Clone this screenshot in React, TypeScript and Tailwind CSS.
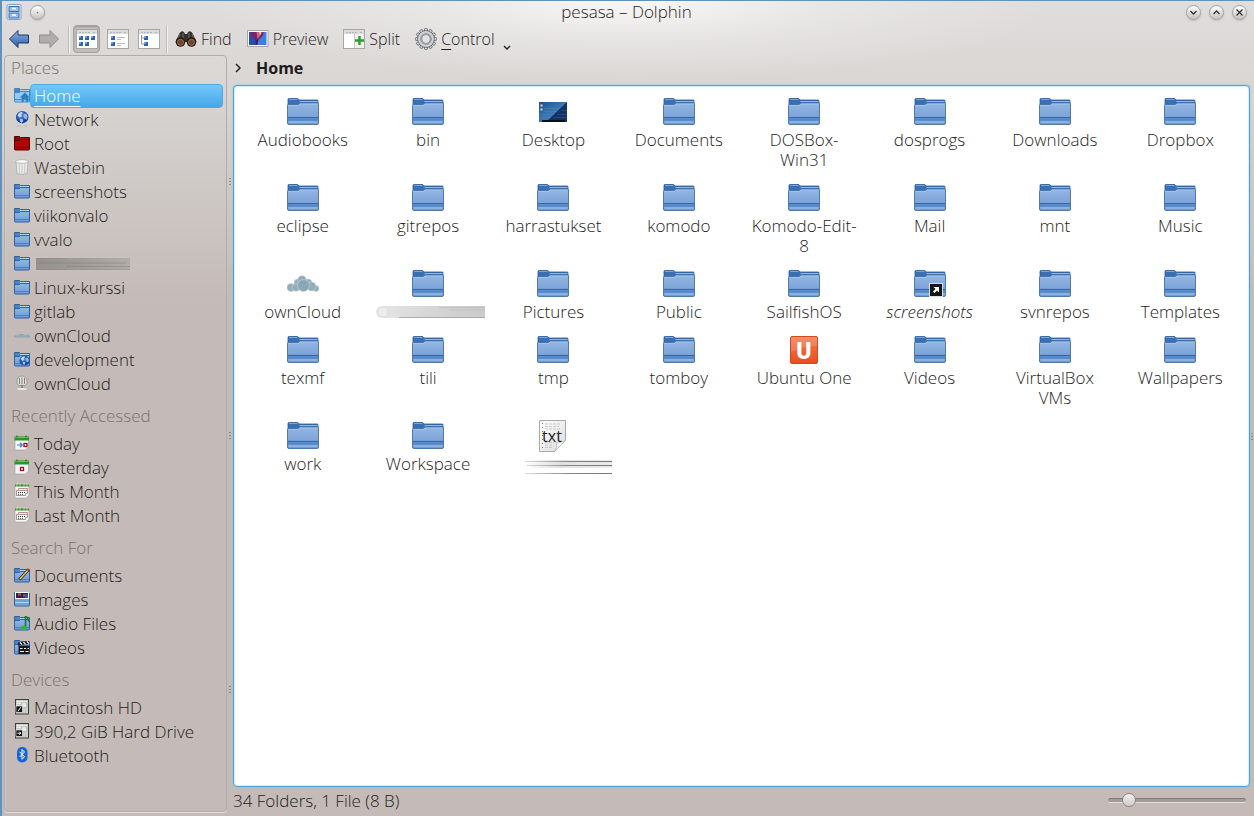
import { useState, type ReactElement, type ReactNode } from 'react'

interface Place {
  id: string
  label: string
  icon: ReactElement
}

interface PlaceSection {
  title: string
  places: Place[]
}

interface FileEntry {
  id: string
  name: string
  kind?: 'desktop' | 'cloud' | 'ubuntu' | 'text' | 'link'
}

function SmallFolder({ tone = 'blue', children }: { tone?: 'blue' | 'red' | 'light'; children?: ReactNode }): ReactElement {
  const red = tone === 'red'
  const edge = red ? '#5c0000' : tone === 'light' ? '#3f8cc4' : '#2f5f9e'
  const front = red ? '#b00505' : tone === 'light' ? '#8fcbf3' : 'url(#folderFront)'
  return (
    <svg viewBox="0 0 16 16" className="h-4 w-4">
      <path d="M.5 14V1.5h5l1 1h9V14z" fill={red ? '#8d0505' : '#4a83c6'} stroke={edge} />
      <path d="M6 3.5h9" stroke={red ? '#a11' : '#b8d6f5'} />
      <path d="M.5 5.5h5l1-1h9v9.5a1 1 0 0 1-1 1h-13a1 1 0 0 1-1-1z" fill={front} stroke={edge} />
      <path d="M1 12.5h14" stroke={red ? '#8a0000' : '#4a7fc0'} />
      {children}
    </svg>
  )
}

function Globe({ x = 0, y = 0, r = 6 }: { x?: number; y?: number; r?: number }): ReactElement {
  return (
    <g transform={`translate(${x} ${y}) scale(${r / 6})`}>
      <circle cx="6" cy="6" r="6" fill="url(#globeBlue)" />
      <path d="M1.500 4Q3 1 6 .8L6.500 2.500 5 3.500 5.500 5 3.500 6.500z" fill="#c4dbf8" />
      <path d="M7.500 3l2.500-.5 1.300 3-1 3-1.800-1-1.500-2.500z" fill="#8fb6ec" />
      <path d="M4 7.500l2.500.5.5 1.500-1.500 2-1.500-1.500z" fill="#a9c8f2" />
    </g>
  )
}

function NetworkIcon(): ReactElement {
  return (
    <svg viewBox="0 0 16 16" className="h-4 w-4">
      <path d="M3 15.2q5-2.4 10 0z" fill="#f2f2f2" stroke="#aaa" strokeWidth=".5" />
      <path d="M8 12v2.5" stroke="#ddd" strokeWidth="2" />
      <Globe x={2} y={0} r={6.2} />
    </svg>
  )
}

function WastebinIcon(): ReactElement {
  return (
    <svg viewBox="0 0 16 16" className="h-4 w-4">
      <path d="M2 2.5h12l-1 12q-5 2-10 0z" fill="#ececea" stroke="#a3a09e" strokeWidth=".7" />
      <path d="M5 4l.5 10M8 4v10.500M11 4l-.5 10" stroke="#c9c6c4" />
      <ellipse cx="8" cy="2.500" rx="6.300" ry="1.700" fill="#fff" stroke="#999" strokeWidth=".6" />
    </svg>
  )
}

function CloudShape(): ReactElement {
  return (
    <g fill="#93adb9" stroke="#c8d6dc" strokeWidth=".6">
      <circle cx="11" cy="10" r="4" />
      <circle cx="21" cy="10" r="4" />
      <circle cx="15" cy="7" r="4.300" />
      <circle cx="4" cy="14.500" r="4" />
      <circle cx="29" cy="15.500" r="3" />
      <circle cx="9" cy="14.500" r="3.800" />
      <circle cx="24.500" cy="13.500" r="4.500" />
      <circle cx="16.500" cy="12.500" r="6" fill="#8aa7b5" />
    </g>
  )
}

function SmallCloud(): ReactElement {
  return (
    <svg viewBox="0 0 16 16" className="h-4 w-4">
      <path d="M.5 10.500a2 1.500 0 0 1 3-2q4-3.500 8 0a2 1.500 0 0 1 4 2z" fill="#86a7b4" />
      <path d="M2 9h12" stroke="#a4bcc5" strokeWidth=".7" />
    </svg>
  )
}

function ServerIcon(): ReactElement {
  return (
    <svg viewBox="0 0 16 16" className="h-4 w-4">
      <path d="M3 6a5 5 0 0 1 10 0v3l-2 1.500H5L3 9z" fill="#e2e2e0" stroke="#8d8b89" strokeWidth=".8" />
      <path d="M5.500 3v6M8 2.500v7M10.500 3v6" stroke="#807e7c" />
      <ellipse cx="8" cy="14" rx="5.500" ry="1.500" fill="#eee" stroke="#999" strokeWidth=".5" />
      <path d="M8 10v3" stroke="#888" strokeWidth="2" />
    </svg>
  )
}

function CalendarIcon({ variant }: { variant: 'today' | 'day' | 'month' }): ReactElement {
  if (variant === 'month') {
    return (
      <svg viewBox="0 0 16 16" className="h-4 w-4">
        <path d="M1 2h14v10l-3 3H1z" fill="#fafafa" stroke="#999" strokeWidth=".6" />
        <path d="M1 1.500h14v2H1z" fill="#2b9423" />
        <path d="M3 0v3M6 0v3M10 0v3M13 0v3" stroke="#e8f5e5" strokeWidth=".7" />
        <path d="M4.500 5.500h9v5h-2v2h-9v-5h2z" fill="#fff" stroke="#b56a6a" strokeWidth=".8" />
        <path d="M5.500 7.500h7M4 9.500h8M4 11.300h6" stroke="#333" strokeDasharray="1 1" />
      </svg>
    )
  }
  return (
    <svg viewBox="0 0 16 16" className="h-4 w-4">
      <path d="M1 2h13.500v10l-3 3H1z" fill="#f7f7f7" stroke="#999" strokeWidth=".6" />
      <path d="M.5 1.500h14.500v4H.5z" fill="#2b9423" />
      <path d="M1 2.500h13.500" stroke="#6cc763" />
      <path d="M3 .5v2M12 .5v2" stroke="#1c5f17" />
      {variant === 'today' && <path d="M3 10h5M6 7.800L8.300 10 6 12.200" fill="none" stroke="#3a7fd0" strokeWidth="1.200" />}
      <rect x={variant === 'today' ? 10 : 6.5} y="8.500" width="3" height="3" fill="#fff" stroke="#8e1328" strokeWidth="1.300" />
    </svg>
  )
}

function DriveIcon({ mount }: { mount?: boolean }): ReactElement {
  return (
    <svg viewBox="0 0 16 16" className="h-4 w-4">
      <rect x="1.500" y=".5" width="13" height="14.500" fill="#c9cfc6" stroke="#3c423b" />
      <path d="M3 2.500h10M3 4.500h10" stroke="#f1f4ef" />
      <circle cx="10" cy="6" r="3" fill="#e6eae4" stroke="#95a093" strokeWidth=".6" />
      <rect x="2" y="7" width="6.500" height="6.500" fill="#111" stroke="#fff" strokeWidth=".6" />
      <path d={mount ? 'M3.500 10.200h3.200M5.300 8.700l1.500 1.500-1.500 1.500' : 'M4 12.300l2.700-4'} fill="none" stroke="#fff" />
    </svg>
  )
}

function BluetoothIcon(): ReactElement {
  return (
    <svg viewBox="0 0 16 16" className="h-4 w-4">
      <rect x="3" y="0" width="10.500" height="15.500" rx="5" fill="#1565d8" />
      <path d="M5.500 4.800l5 5L8 12.300V2.500l2.500 2.500-5 5" fill="none" stroke="#fff" />
    </svg>
  )
}

const sections: PlaceSection[] = [
  {
    title: 'Places',
    places: [
      {
        id: 'home',
        label: 'Home',
        icon: (
          <SmallFolder tone="light">
            <path d="M6 10.500L10.800 5.500l5 5h-1.500V15h-2.300v-3H9.800v3H7.500v-4.500z" fill="#2c7dbd" stroke="#5fa9dc" strokeWidth=".4" />
          </SmallFolder>
        ),
      },
      { id: 'network', label: 'Network', icon: <NetworkIcon /> },
      { id: 'root', label: 'Root', icon: <SmallFolder tone="red" /> },
      { id: 'wastebin', label: 'Wastebin', icon: <WastebinIcon /> },
      { id: 'screenshots', label: 'screenshots', icon: <SmallFolder /> },
      { id: 'viikonvalo', label: 'viikonvalo', icon: <SmallFolder /> },
      { id: 'vvalo', label: 'vvalo', icon: <SmallFolder /> },
      { id: 'hidden', label: '', icon: <SmallFolder /> },
      { id: 'linux-kurssi', label: 'Linux-kurssi', icon: <SmallFolder /> },
      { id: 'gitlab', label: 'gitlab', icon: <SmallFolder /> },
      { id: 'owncloud', label: 'ownCloud', icon: <SmallCloud /> },
      {
        id: 'development',
        label: 'development',
        icon: (
          <SmallFolder>
            <Globe x={5.5} y={4.5} r={5} />
          </SmallFolder>
        ),
      },
      { id: 'owncloud-remote', label: 'ownCloud', icon: <ServerIcon /> },
    ],
  },
  {
    title: 'Recently Accessed',
    places: [
      { id: 'today', label: 'Today', icon: <CalendarIcon variant="today" /> },
      { id: 'yesterday', label: 'Yesterday', icon: <CalendarIcon variant="day" /> },
      { id: 'this-month', label: 'This Month', icon: <CalendarIcon variant="month" /> },
      { id: 'last-month', label: 'Last Month', icon: <CalendarIcon variant="month" /> },
    ],
  },
  {
    title: 'Search For',
    places: [
      {
        id: 'documents',
        label: 'Documents',
        icon: (
          <SmallFolder>
            <path d="M5.500 12.500L14.500 2.500" stroke="#332a20" strokeWidth="3" />
            <path d="M6 12L14 3" stroke="#eec04a" strokeWidth="1.500" />
            <path d="M13.500 3.500l1.300-1.500" stroke="#c8362e" strokeWidth="2" />
          </SmallFolder>
        ),
      },
      {
        id: 'images',
        label: 'Images',
        icon: (
          <SmallFolder>
            <rect x="1.500" y="1.500" width="13" height="6" fill="#3b1d3e" stroke="#fff" />
            <path d="M4 3.500h3M9 4.500h2" stroke="#c05a3c" strokeWidth="2" />
            <path d="M11 3h3v4h-3z" fill="#2c59b4" />
            <path d="M1 8.500h14V14.500H1z" fill="#6ea0dc" />
            <path d="M1 11.500h14" stroke="#b5d2f2" />
          </SmallFolder>
        ),
      },
      {
        id: 'audio',
        label: 'Audio Files',
        icon: (
          <SmallFolder>
            <path d="M11.500 1v11M11.500 1.500q3 1 3 5" fill="none" stroke="#157a25" strokeWidth="1.600" />
            <ellipse cx="9.700" cy="13" rx="3" ry="2.200" fill="#2fb53d" />
          </SmallFolder>
        ),
      },
      {
        id: 'videos',
        label: 'Videos',
        icon: (
          <SmallFolder>
            <path d="M4.500 6.500h11V15h-11z" fill="#181818" />
            <path d="M4 3.500l11-1.500v3L4 6.500z" fill="#222" />
            <path d="M6 3.300l2 2.400M9.500 2.900l2 2.400M13 2.400l1.800 2.200M6 9.500h2.500M10 9.500h2M13.500 9.500h1.500M6 12.500h4M11.500 12.500h3" stroke="#f4f4f4" strokeWidth="1.200" />
          </SmallFolder>
        ),
      },
    ],
  },
  {
    title: 'Devices',
    places: [
      { id: 'macintosh', label: 'Macintosh HD', icon: <DriveIcon /> },
      { id: 'hard-drive', label: '390,2 GiB Hard Drive', icon: <DriveIcon mount /> },
      { id: 'bluetooth', label: 'Bluetooth', icon: <BluetoothIcon /> },
    ],
  },
]

const files: FileEntry[] = [
  { id: 'f1', name: 'Audiobooks' },
  { id: 'f2', name: 'bin' },
  { id: 'f3', name: 'Desktop', kind: 'desktop' },
  { id: 'f4', name: 'Documents' },
  { id: 'f5', name: 'DOSBox-Win31' },
  { id: 'f6', name: 'dosprogs' },
  { id: 'f7', name: 'Downloads' },
  { id: 'f8', name: 'Dropbox' },
  { id: 'f9', name: 'eclipse' },
  { id: 'f10', name: 'gitrepos' },
  { id: 'f11', name: 'harrastukset' },
  { id: 'f12', name: 'komodo' },
  { id: 'f13', name: 'Komodo-Edit-8' },
  { id: 'f14', name: 'Mail' },
  { id: 'f15', name: 'mnt' },
  { id: 'f16', name: 'Music' },
  { id: 'f17', name: 'ownCloud', kind: 'cloud' },
  { id: 'f18', name: '' },
  { id: 'f19', name: 'Pictures' },
  { id: 'f20', name: 'Public' },
  { id: 'f21', name: 'SailfishOS' },
  { id: 'f22', name: 'screenshots', kind: 'link' },
  { id: 'f23', name: 'svnrepos' },
  { id: 'f24', name: 'Templates' },
  { id: 'f25', name: 'texmf' },
  { id: 'f26', name: 'tili' },
  { id: 'f27', name: 'tmp' },
  { id: 'f28', name: 'tomboy' },
  { id: 'f29', name: 'Ubuntu One', kind: 'ubuntu' },
  { id: 'f30', name: 'Videos' },
  { id: 'f31', name: 'VirtualBox VMs' },
  { id: 'f32', name: 'Wallpapers' },
  { id: 'f33', name: 'work' },
  { id: 'f34', name: 'Workspace' },
  { id: 'f35', name: '', kind: 'text' },
]

function FileIcon({ kind }: { kind?: FileEntry['kind'] }): ReactElement {
  if (kind === 'desktop') {
    return (
      <svg viewBox="0 0 32 32" className="h-8 w-8">
        <rect x="2" y="6" width="28" height="20" fill="url(#desktopBlue)" />
        <path d="M30 6v20H9z" fill="#123263" />
        <path d="M7 12.500h16M7 15.500h13M5 18.500h12M5 21.500h9" stroke="#4a86bd" strokeWidth=".5" />
        <path d="M24 14.500h6M20 18.500h10M16 21.500h14" stroke="#2f5c98" strokeWidth=".6" />
        <path d="M3.500 9.500h2M3.500 13.500h2" stroke="#c9e3c6" strokeWidth="2" />
        <path d="M5 25h23" stroke="#0a0f18" strokeWidth="2" />
      </svg>
    )
  }
  if (kind === 'cloud') {
    return (
      <svg viewBox="0 0 32 32" className="h-8 w-8">
        <g transform="translate(0 5)">
          <CloudShape />
        </g>
      </svg>
    )
  }
  if (kind === 'ubuntu') {
    return (
      <svg viewBox="0 0 32 32" className="h-8 w-8">
        <rect x="2.500" y="2.500" width="27" height="27" rx="1.500" fill="url(#ubuntuOrange)" stroke="#cf4a22" />
        <path d="M3 3h26v9Q16 12 3 18z" fill="#fff" opacity=".15" />
        <text x="16" y="24.500" textAnchor="middle" fontSize="23" fontWeight="900" fontFamily="Roboto, sans-serif" fill="#fff">
          U
        </text>
      </svg>
    )
  }
  if (kind === 'text') {
    return (
      <svg viewBox="0 0 32 32" className="h-8 w-8">
        <path d="M2.500.5h26v20l-11 11h-15z" fill="url(#paper)" stroke="#a9a9a9" />
        <path d="M8 4h16M8 6.500h14M8 9h16M8 22.500h9M8 25h7M8 27.500h8" stroke="#bdbdbd" strokeWidth=".8" strokeDasharray="3 1" />
        <path d="M5.500 3v27" stroke="#777" strokeDasharray="1 3" />
        <path d="M28.500 20.500q-6 3-9 1.500 1 5-2 9.500z" fill="#f3f3f3" stroke="#aaa" strokeWidth=".6" />
        <text x="15" y="22" textAnchor="middle" fontSize="16" fontWeight="400" fontFamily="Open Sans, sans-serif" fill="#222">
          txt
        </text>
      </svg>
    )
  }
  return (
    <svg viewBox="0 0 32 32" className="h-8 w-8">
      <g transform="translate(0 1)">
        <path d="M1 9V2.300q0-.8.8-.8h9l1.500 1.500h18q.7 0 .7.700V9z" fill="#3a70b3" stroke="#2a5b9b" strokeWidth=".8" />
        <path d="M2 2.500h8.500" stroke="#74a5dd" />
        <path d="M12.500 4.500h18" stroke="#8db9e8" />
        <path d="M.5 8.500q0-1 1-1h9.500l2-1.500h17.500q1 0 1 1v19q0 1.500-1.500 1.500H2q-1.500 0-1.500-1.500z" fill="url(#folderFront)" stroke="#44719f" strokeWidth=".9" />
        <path d="M1.500 8.500h9.800l2-1.500h17.500" fill="none" stroke="#a6c8ef" strokeWidth=".8" />
        <path d="M1 20.500h30" stroke="#3567a8" strokeWidth="1.200" />
        <path d="M1 22.500h30" stroke="#5388c9" strokeWidth="2.500" />
        <path d="M1.500 25h29" stroke="#92b8e4" strokeWidth="1.500" />
      </g>
      {kind === 'link' && (
        <>
          <rect x="15.500" y="15.500" width="13" height="13" fill="#161616" stroke="#ddd" />
          <path d="M19.500 19h5.500v5.500l-2-2-2.500 2.500-1.500-1.500 2.500-2.500z" fill="#fff" />
        </>
      )}
    </svg>
  )
}

// Smudges that stand where a name has been wiped out
function SidebarSmudge(): ReactElement {
  return (
    <svg viewBox="0 0 94 12" className="ml-[2px] h-3 w-[94px]">
      <rect width="94" height="12" fill="url(#smudgeDark)" />
      <path d="M0 5h90M30 8.500h64" stroke="#77726f" strokeWidth=".7" opacity=".6" />
      <path d="M0 .5h30M0 11.500h94" stroke="#8a8582" strokeWidth=".6" opacity=".6" />
    </svg>
  )
}

function FolderSmudge(): ReactElement {
  return (
    <svg viewBox="0 0 118 20" className="h-5 w-[118px]">
      <path d="M13 4h103v12H13a6 6 0 0 1 0-12z" fill="url(#smudgeLight)" />
      <circle cx="14" cy="10" r="5" fill="#ededed" stroke="#d8d8d8" strokeWidth=".7" />
      <path d="M70 5.500h46M80 8h36" stroke="#b5b5b5" strokeWidth=".6" />
      <path d="M30 15.500h86" stroke="#999" strokeWidth=".7" />
    </svg>
  )
}

function TextSmudge(): ReactElement {
  return (
    <svg viewBox="0 0 118 20" className="h-5 w-[118px]">
      <rect x="31" y="6" width="87" height="8" fill="url(#smudgeFade)" />
      <rect x="31" y="7" width="87" height="1" fill="url(#smudgeLine)" />
      <rect x="33" y="11" width="85" height="1" fill="url(#smudgeLine)" />
      <rect x="31" y="19" width="87" height="1" fill="url(#smudgeLine)" />
    </svg>
  )
}

function SharedGradients(): ReactElement {
  return (
    <svg className="absolute h-0 w-0" aria-hidden="true">
      <defs>
        <linearGradient id="folderFront" x1="0" y1="0" x2="0" y2="1">
          <stop offset="0" stopColor="#93b7e4" />
          <stop offset="1" stopColor="#7099d2" />
        </linearGradient>
        <linearGradient id="desktopBlue" x1="0" y1="0" x2="1" y2="1">
          <stop offset="0" stopColor="#1f4f86" />
          <stop offset=".5" stopColor="#3c78b4" />
        </linearGradient>
        <radialGradient id="globeBlue" cx=".4" cy=".35">
          <stop offset="0" stopColor="#5d94e0" />
          <stop offset="1" stopColor="#173f95" />
        </radialGradient>
        <linearGradient id="ubuntuOrange" x1="0" y1="0" x2="0" y2="1">
          <stop offset="0" stopColor="#f3794e" />
          <stop offset="1" stopColor="#ea4f1c" />
        </linearGradient>
        <linearGradient id="paper" x1="0" y1="0" x2="1" y2="1">
          <stop offset="0" stopColor="#fff" />
          <stop offset="1" stopColor="#ddd" />
        </linearGradient>
        <linearGradient id="smudgeDark">
          <stop offset="0" stopColor="#96918e" />
          <stop offset=".5" stopColor="#a39d9a" />
          <stop offset="1" stopColor="#b3adaa" />
        </linearGradient>
        <linearGradient id="smudgeLight">
          <stop offset="0" stopColor="#e6e6e6" />
          <stop offset=".5" stopColor="#d6d6d6" />
          <stop offset="1" stopColor="#cbcbcb" />
        </linearGradient>
        <linearGradient id="smudgeFade">
          <stop offset="0" stopColor="#fff" />
          <stop offset=".4" stopColor="#e0e0e0" />
          <stop offset="1" stopColor="#ececec" />
        </linearGradient>
        <linearGradient id="smudgeLine" gradientUnits="userSpaceOnUse" x1="31" y1="0" x2="118" y2="0">
          <stop offset="0" stopColor="#ddd" />
          <stop offset=".5" stopColor="#888" />
          <stop offset="1" stopColor="#777" />
        </linearGradient>
        <linearGradient id="arrowBlue" x1="0" y1="0" x2="0" y2="1">
          <stop offset="0" stopColor="#8eb2e2" />
          <stop offset="1" stopColor="#2d5ca6" />
        </linearGradient>
      </defs>
    </svg>
  )
}

function ArrowIcon({ forward }: { forward?: boolean }): ReactElement {
  return (
    <svg viewBox="0 0 22 22" className="h-[22px] w-[22px]">
      <path
        d={forward ? 'M20.500 11L12 2.500v4.500H1.500v8H12v4.500z' : 'M1.500 11L10 2.500v4.500h10.500v8H10v4.500z'}
        fill={forward ? '#b0aeac' : 'url(#arrowBlue)'}
        stroke={forward ? '#8f8d8b' : '#1c3867'}
        strokeLinejoin="round"
      />
    </svg>
  )
}

function ViewFrame({ children }: { children: ReactNode }): ReactElement {
  return (
    <svg viewBox="0 0 22 22" className="h-[22px] w-[22px]">
      <rect x=".5" y="1.500" width="21" height="19" fill="#fff" stroke="#a9a7a5" />
      <path d="M1 4h20" stroke="#dcdcdc" strokeWidth="4" />
      <path d="M3 4.500h12M17 4.500h3" stroke="#b5b5b5" strokeDasharray="2 1" />
      {children}
    </svg>
  )
}

const viewModes = [
  {
    id: 'icons',
    label: 'Icons',
    icon: (
      <ViewFrame>
        <path d="M3 10h4M9 10h4M15 10h4M3 16h4M9 16h4" stroke="#2c62b0" strokeWidth="4" />
        <path d="M3 9h2M9 9h2M15 9h2M3 15h2M9 15h2" stroke="#8ab6ea" strokeWidth="1.500" />
      </ViewFrame>
    ),
  },
  {
    id: 'details',
    label: 'Details',
    icon: (
      <ViewFrame>
        <path d="M4 10h4M4 16h4" stroke="#2c62b0" strokeWidth="4" />
        <path d="M4 9h2M4 15h2" stroke="#8ab6ea" strokeWidth="1.500" />
        <path d="M10 9.500h8M10 11.500h4M10 15.500h8M10 17.500h4" stroke="#aaa" strokeWidth=".8" />
      </ViewFrame>
    ),
  },
  {
    id: 'tree',
    label: 'Tree',
    icon: (
      <ViewFrame>
        <path d="M3.500 7v9h3M3.500 10h3" fill="none" stroke="#999" />
        <path d="M6 10h4M6 16h4" stroke="#2c62b0" strokeWidth="4" />
        <path d="M6 9h2M6 15h2" stroke="#8ab6ea" strokeWidth="1.500" />
      </ViewFrame>
    ),
  },
]

function BinocularsIcon(): ReactElement {
  return (
    <svg viewBox="0 0 22 22" className="h-[22px] w-[22px]">
      <path d="M4 6q2-4 5-2l1 2h2l1-2q3-2 5 2l3.500 8H.5z" fill="#35302c" />
      <path d="M5 6l-2 5M8 5v5M17 6l2 5M14 5v5" stroke="#76706b" />
      <circle cx="5.500" cy="14" r="4.800" fill="#211d1a" />
      <circle cx="16.500" cy="14" r="4.800" fill="#211d1a" />
      <circle cx="5.500" cy="14.300" r="3" fill="#6b4430" stroke="#c9794d" strokeWidth=".8" />
      <circle cx="16.500" cy="14.300" r="3" fill="#6b4430" stroke="#c9794d" strokeWidth=".8" />
    </svg>
  )
}

function PreviewIcon(): ReactElement {
  return (
    <svg viewBox="0 0 22 22" className="h-[22px] w-[22px]">
      <rect x=".5" y="2.500" width="20.500" height="16" fill="#fff" stroke="#a5a5a5" />
      <rect x="2" y="4" width="17.500" height="13" fill="#3a80e0" />
      <path d="M2 4h5l2 13H2z" fill="#2350b0" />
      <path d="M4 4h12.500q.5 4-3.500 6.500L10 13 7 11Q3.500 8 4 4z" fill="#7c2468" />
      <path d="M9.500 4h4q0 4-3 7z" fill="#c9688c" />
      <path d="M12 4h2.500q0 2-1.500 3.500z" fill="#f0b59a" />
      <path d="M8.300 11.500l3 .5-1 5H8.500z" fill="#4c1a4a" />
    </svg>
  )
}

function SplitIcon(): ReactElement {
  return (
    <ViewFrame>
      <path d="M11.500 6v14" stroke="#c5c5c5" />
      <path d="M12 6h9v14h-9z" fill="#f0f0f0" />
      <path d="M16.500 8v9M12 12.500h9" stroke="#2e9e2a" strokeWidth="2.500" />
    </ViewFrame>
  )
}

const gearTeeth = [0, 30, 60, 90, 120, 150, 180, 210, 240, 270, 300, 330]

function GearIcon(): ReactElement {
  return (
    <svg viewBox="0 0 22 22" className="h-[22px] w-[22px]">
      {gearTeeth.map((angle) => (
        <rect
          key={angle}
          x="9.500"
          y=".6"
          width="3"
          height="5"
          rx=".6"
          fill="#d4d6d9"
          stroke="#62666b"
          strokeWidth=".8"
          transform={`rotate(${angle} 11 11)`}
        />
      ))}
      <circle cx="11" cy="11" r="6.300" fill="none" stroke="#62666b" strokeWidth="4.800" />
      <circle cx="11" cy="11" r="6.300" fill="none" stroke="#cfd1d4" strokeWidth="3.400" />
      <circle cx="11" cy="11" r="5.300" fill="none" stroke="#8b8f94" strokeWidth="1" />
    </svg>
  )
}

function WindowButton({ label, children }: { label: string; children: ReactNode }): ReactElement {
  return (
    <button
      type="button"
      aria-label={label}
      className="flex h-[15px] w-[15px] items-center justify-center rounded-full border border-[#a3a19f] bg-linear-to-b from-white to-[#c5c3c1] shadow-sm"
    >
      <svg viewBox="0 0 9 9" className="h-[9px] w-[9px]" fill="none" stroke="#333" strokeWidth="1.300">
        {children}
      </svg>
    </button>
  )
}

function ToolButton({ icon, children }: { icon: ReactElement; children: ReactNode }): ReactElement {
  return (
    <button type="button" className="flex h-7 items-center gap-1">
      {icon}
      <span>{children}</span>
    </button>
  )
}

function ToolSeparator(): ReactElement {
  return <span className="h-7 w-px bg-[#bfbbb8] shadow-[1px_0_0_#f4f3f2]" />
}

function SplitterGrip(): ReactElement {
  return (
    <span className="flex flex-1 flex-col items-center justify-center gap-[2px]">
      <span className="h-px w-[2px] bg-[#8f8986]" />
      <span className="h-px w-[2px] bg-[#8f8986]" />
      <span className="h-px w-[2px] bg-[#8f8986]" />
    </span>
  )
}

export default function App(): ReactElement {
  const [activePlace, setActivePlace] = useState('home')
  const [viewMode, setViewMode] = useState('icons')
  const [zoom, setZoom] = useState(11)

  return (
    <div className="flex h-screen flex-col border-t border-l-2 border-[#5f93bd] bg-[#c4bbb8] bg-[radial-gradient(ellipse_420px_80px_at_50%_0%,#f8f7f6_0%,rgba(240,239,238,0.5)_50%,transparent_100%),linear-gradient(to_bottom,#e0dedd_0px,#d9d6d3_80px,#c4bbb8_300px)] bg-no-repeat font-['Open_Sans','Noto_Sans',sans-serif] text-[17px] font-light leading-5 text-[#1f1c1b]">
      <SharedGradients />
      <header className="grid h-[22px] shrink-0 grid-cols-[1fr_auto_1fr] items-center pr-[7px] pl-1">
        <div className="flex items-center gap-2">
          <svg viewBox="0 0 16 16" className="h-4 w-4">
            <rect x="1" y=".5" width="14" height="15" rx="1.500" fill="#eef3f8" stroke="#7f9dbd" />
            <rect x="3" y="2.500" width="10" height="5" fill="#9cc0e8" stroke="#3c6ca6" />
            <rect x="3" y="9" width="10" height="5" fill="#9cc0e8" stroke="#3c6ca6" />
            <path d="M6 4.500h4M6 11h4" stroke="#fff" strokeWidth="1.500" />
          </svg>
          <WindowButton label="On all desktops">
            <circle cx="4.500" cy="4.500" r=".3" strokeWidth=".8" />
          </WindowButton>
        </div>
        <h1 className="text-[17px] leading-5 font-light">pesasa – Dolphin</h1>
        <div className="flex items-center justify-end gap-2">
          <WindowButton label="Minimize">
            <path d="M1.500 3l3 3 3-3" />
          </WindowButton>
          <WindowButton label="Maximize">
            <path d="M1.500 6l3-3 3 3" />
          </WindowButton>
          <WindowButton label="Close">
            <path d="M1.500 1.500l6 6M7.500 1.500l-6 6" />
          </WindowButton>
        </div>
      </header>

      <div role="toolbar" aria-label="Main toolbar" className="flex h-8 shrink-0 items-center pl-[6px] text-base leading-5">
        <div className="flex items-center gap-2">
          <button type="button" aria-label="Back">
            <ArrowIcon />
          </button>
          <button type="button" aria-label="Forward">
            <ArrowIcon forward />
          </button>
          <ToolSeparator />
        </div>
        <div className="ml-1 flex items-center gap-1">
          {viewModes.map((mode) => (
            <button
              key={mode.id}
              type="button"
              aria-label={mode.label}
              aria-pressed={viewMode === mode.id}
              onClick={() => setViewMode(mode.id)}
              className={`flex h-7 w-[27px] items-center justify-center rounded ${
                viewMode === mode.id ? 'border border-[#a5a19e] bg-[#c3bfbc] shadow-[inset_0_1px_2px_#9b9794]' : ''
              }`}
            >
              {mode.icon}
            </button>
          ))}
        </div>
        <div className="ml-1 flex items-center gap-2">
          <ToolSeparator />
          <div className="flex items-center gap-[15px]">
            <ToolButton icon={<BinocularsIcon />}>Find</ToolButton>
            <ToolButton icon={<PreviewIcon />}>Preview</ToolButton>
            <ToolButton icon={<SplitIcon />}>Split</ToolButton>
            <button type="button" className="flex h-7 items-center gap-1">
              <GearIcon />
              <span>
                <span className="underline underline-offset-4">C</span>ontrol
              </span>
              <svg viewBox="0 0 8 5" className="mt-4 ml-1 h-[5px] w-2" fill="none" stroke="#222" strokeWidth="1.400">
                <path d="M1 1l3 3 3-3" />
              </svg>
            </button>
          </div>
        </div>
      </div>

      <div className="flex min-h-0 flex-1">
        <aside className="mb-1 ml-[2px] flex w-[223px] shrink-0 flex-col gap-2 overflow-hidden rounded border border-[#b3adaa] shadow-[inset_1px_1px_0_#e4e1df55,0_1px_0_#e4e1df]">
          {sections.map((section) => (
            <section key={section.title}>
              <h2 className="flex h-7 items-center pb-1 pl-[6px] text-[17px] leading-5 font-light text-[#78726f]">{section.title}</h2>
              <ul>
                {section.places.map((place) => (
                  <li key={place.id}>
                    <button
                      type="button"
                      aria-label={place.label || 'Hidden place'}
                      onClick={() => setActivePlace(place.id)}
                      className="flex h-6 w-full items-center pr-[3px] pl-[9px] text-left"
                    >
                      <span className="pb-[2px]">{place.icon}</span>
                      <span
                        className={`flex h-6 flex-1 items-center rounded-sm border px-[3px] whitespace-nowrap ${
                          activePlace === place.id
                            ? 'border-[#4fa9e0] bg-linear-to-b from-[#74c7fb] to-[#43a8e8] text-white underline decoration-1 underline-offset-4'
                            : 'border-transparent'
                        }`}
                      >
                        {place.label || <SidebarSmudge />}
                      </span>
                    </button>
                  </li>
                ))}
              </ul>
            </section>
          ))}
        </aside>

        <div className="flex w-[6px] shrink-0 flex-col">
          <SplitterGrip />
          <SplitterGrip />
          <SplitterGrip />
        </div>

        <main className="flex min-w-0 flex-1 flex-col">
          <nav aria-label="Location" className="flex h-[30px] shrink-0 items-center gap-[15px] pb-1 pl-[2px] text-base leading-5">
            <svg viewBox="0 0 6 10" className="h-[10px] w-[6px]" fill="none" stroke="#222" strokeWidth="1.500">
              <path d="M1 1l4 4-4 4" />
            </svg>
            <a href="#home" className="font-bold">
              Home
            </a>
          </nav>
          <div className="flex min-h-0 flex-1">
            <div className="min-w-0 flex-1 overflow-auto rounded border border-[#4da3d2] bg-white px-[6px] pt-[10px] shadow-[0_0_2px_#6cc4f2,inset_0_0_2px_#6cc4f2]">
              <ul className="grid grid-cols-8 gap-y-3">
                {files.map((file) => (
                  <li key={file.id} className="flex justify-center">
                    <button
                      type="button"
                      aria-label={file.name || 'Hidden name'}
                      className="flex w-[118px] flex-col items-center justify-start gap-[2px]"
                    >
                      <FileIcon kind={file.kind} />
                      {file.name ? (
                        <span className={`max-w-[110px] text-center ${file.kind === 'link' ? 'italic' : ''}`}>{file.name}</span>
                      ) : file.kind === 'text' ? (
                        <TextSmudge />
                      ) : (
                        <FolderSmudge />
                      )}
                    </button>
                  </li>
                ))}
              </ul>
            </div>
            <div className="flex w-1 shrink-0 flex-col">
              <SplitterGrip />
            </div>
          </div>
          <footer className="flex h-[29px] shrink-0 items-center justify-between pr-2 pb-[2px]">
            <p>34 Folders, 1 File (8 B)</p>
            <input
              type="range"
              aria-label="Icon size"
              min={0}
              max={100}
              value={zoom}
              onChange={(event) => setZoom(Number(event.target.value))}
              className="h-4 w-[138px] appearance-none bg-transparent [&::-webkit-slider-runnable-track]:h-[5px] [&::-webkit-slider-runnable-track]:rounded-full [&::-webkit-slider-runnable-track]:border-t [&::-webkit-slider-runnable-track]:border-b [&::-webkit-slider-runnable-track]:border-t-[#827b78] [&::-webkit-slider-runnable-track]:border-b-[#e6e2e0] [&::-webkit-slider-runnable-track]:bg-[#a39b98] [&::-webkit-slider-thumb]:-mt-[6px] [&::-webkit-slider-thumb]:h-[14px] [&::-webkit-slider-thumb]:w-[14px] [&::-webkit-slider-thumb]:appearance-none [&::-webkit-slider-thumb]:rounded-full [&::-webkit-slider-thumb]:border [&::-webkit-slider-thumb]:border-[#8a8583] [&::-webkit-slider-thumb]:bg-linear-to-b [&::-webkit-slider-thumb]:from-[#f2f1f0] [&::-webkit-slider-thumb]:to-[#cfccca]"
            />
          </footer>
        </main>
      </div>
    </div>
  )
}
